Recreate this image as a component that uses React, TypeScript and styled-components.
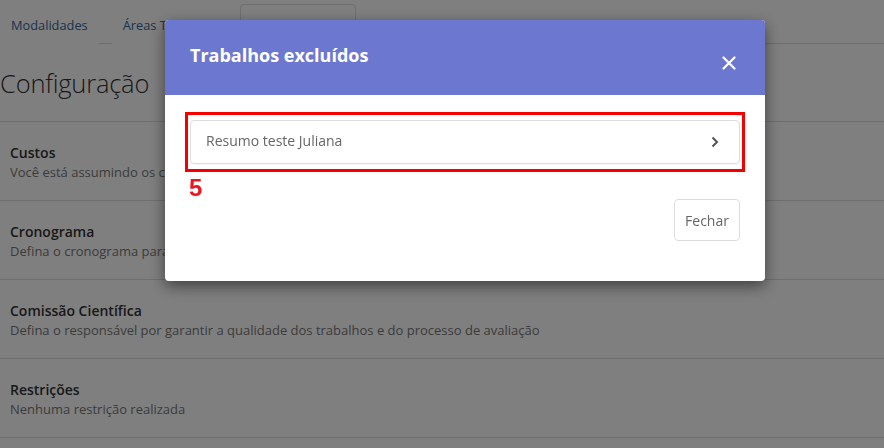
import React from "react";
import styled, { createGlobalStyle } from "styled-components";

const Global = createGlobalStyle`
  html, body { margin: 0; padding: 0; background: #fff; }
  body { font-family: "Open Sans", "Liberation Sans", sans-serif; width: 884px; height: 448px; overflow: hidden; }
  * { box-sizing: border-box; }
`;

const Page = styled.div`
  width: 884px;
  height: 448px;
  background: #fff;
`;

const Tabs = styled.nav`
  display: flex;
  align-items: flex-end;
  height: 44px;
  border-bottom: 1px solid #ddd;
`;

const Tab = styled.div<{ $active?: boolean; $space?: number }>`
  display: flex;
  align-items: center;
  height: ${(p) => (p.$active ? "40px" : "43px")};
  padding: 0 ${(p) => (p.$active ? "16px" : "10px")};
  margin-right: ${(p) => p.$space ?? 0}px;
  font-size: 12.8px;
  color: ${(p) => (p.$active ? "#333" : "#36679a")};
  font-weight: ${(p) => (p.$active ? 600 : 400)};
  border: ${(p) => (p.$active ? "1px solid #ddd" : "1px solid transparent")};
  border-bottom: none;
  border-radius: 4px 4px 0 0;
  margin-bottom: -1px;
  background: #fff;
  padding-top: ${(p) => (p.$active ? "0" : "3px")};
`;

const Heading = styled.h1`
  margin: 0;
  height: 78px;
  display: flex;
  align-items: center;
  font-size: 25.5px;
  font-weight: 300;
  color: #333;
  border-bottom: 1px solid #ddd;
  letter-spacing: -0.2px;
`;

const Section = styled.div`
  height: 79px;
  padding: 21px 10px 0;
  border-bottom: 1px solid #ddd;
`;

const SectionTitle = styled.div`
  font-size: 14px;
  font-weight: 600;
  color: #333;
  line-height: 20px;
`;

const SectionText = styled.div`
  font-size: 13px;
  color: #777;
  line-height: 18px;
`;

const Overlay = styled.div`
  position: fixed;
  inset: 0;
  background: rgba(0, 0, 0, 0.5);
`;

const Modal = styled.div`
  position: fixed;
  top: 20px;
  left: 165px;
  width: 600px;
  background: #fff;
  border-radius: 4px;
  box-shadow: 0 5px 15px rgba(0, 0, 0, 0.5);
  overflow: hidden;
`;

const ModalHeader = styled.div`
  height: 75px;
  background: #6c78d0;
  display: flex;
  align-items: center;
  justify-content: space-between;
  padding: 0 28px 0 25px;
`;

const ModalTitle = styled.h2`
  margin: 0 0 5px;
  font-size: 18px;
  font-weight: 700;
  color: #fff;
  line-height: 24px;
`;

const Close = styled.button`
  border: 0;
  background: none;
  padding: 0;
  margin-top: 10px;
  width: 16px;
  height: 16px;
  display: flex;
  align-items: center;
  justify-content: center;
  cursor: pointer;
`;

const ModalBody = styled.div`
  padding: 17px 20px 40px;
`;

const Highlight = styled.div`
  border: 3px solid #f40000;
  padding: 5px 2px 5px;
`;

const Item = styled.div`
  height: 44px;
  border: 1px solid #ddd;
  border-radius: 4px;
  display: flex;
  align-items: center;
  justify-content: space-between;
  padding: 0 20px 3px 15px;
  font-size: 14px;
  color: #666;
  box-shadow: 0 1px 1px rgba(0, 0, 0, 0.03);
`;

const Chevron = styled.svg`
  margin-top: 3px;
`;

const Marker = styled.div`
  height: 27px;
  padding: 5px 0 0 4px;
  font-family: "Liberation Sans", Arial, sans-serif;
  font-weight: 700;
  font-size: 24px;
  line-height: 22px;
  color: #f0141e;
`;

const Footer = styled.div`
  display: flex;
  justify-content: flex-end;
  padding-right: 5px;
`;

const Button = styled.button`
  height: 42px;
  width: 66px;
  padding: 0;
  border: 1px solid #ddd;
  border-radius: 4px;
  background: #fff;
  font-family: "Open Sans", "Liberation Sans", sans-serif;
  font-size: 14px;
  color: #666;
`;

const sections = [
  { t: "Custos", d: "Você está assumindo os custos de submissão dos trabalhos" },
  { t: "Cronograma", d: "Defina o cronograma para submissão e avaliação dos trabalhos" },
  { t: "Comissão Científica", d: "Defina o responsável por garantir a qualidade dos trabalhos e do processo de avaliação" },
  { t: "Restrições", d: "Nenhuma restrição realizada" },
];

export default function App() {
  return (
    <>
      <Global />
      <Page>
        <Tabs>
          <Tab $space={13}>Modalidades</Tab>
          <Tab $space={9}>Áreas Temáticas</Tab>
          <Tab $active>Configuração</Tab>
        </Tabs>
        <Heading>Configuração</Heading>
        {sections.map((s) => (
          <Section key={s.t}>
            <SectionTitle>{s.t}</SectionTitle>
            <SectionText>{s.d}</SectionText>
          </Section>
        ))}
      </Page>
      <Overlay />
      <Modal>
        <ModalHeader>
          <ModalTitle>Trabalhos excluídos</ModalTitle>
          <Close aria-label="Fechar">
            <svg width="14" height="14" viewBox="0 0 14 14">
              <path d="M1.5 1.5 L12.5 12.5 M12.5 1.5 L1.5 12.5" stroke="#fff" strokeWidth="2.2" strokeLinecap="round" />
            </svg>
          </Close>
        </ModalHeader>
        <ModalBody>
          <Highlight>
            <Item>
              <span>Resumo teste Juliana</span>
              <Chevron width="8" height="12" viewBox="0 0 8 12">
                <path d="M1.5 1.5 L6 6 L1.5 10.5" stroke="#555" strokeWidth="2" fill="none" />
              </Chevron>
            </Item>
          </Highlight>
          <Marker>5</Marker>
          <Footer>
            <Button>Fechar</Button>
          </Footer>
        </ModalBody>
      </Modal>
    </>
  );
}
